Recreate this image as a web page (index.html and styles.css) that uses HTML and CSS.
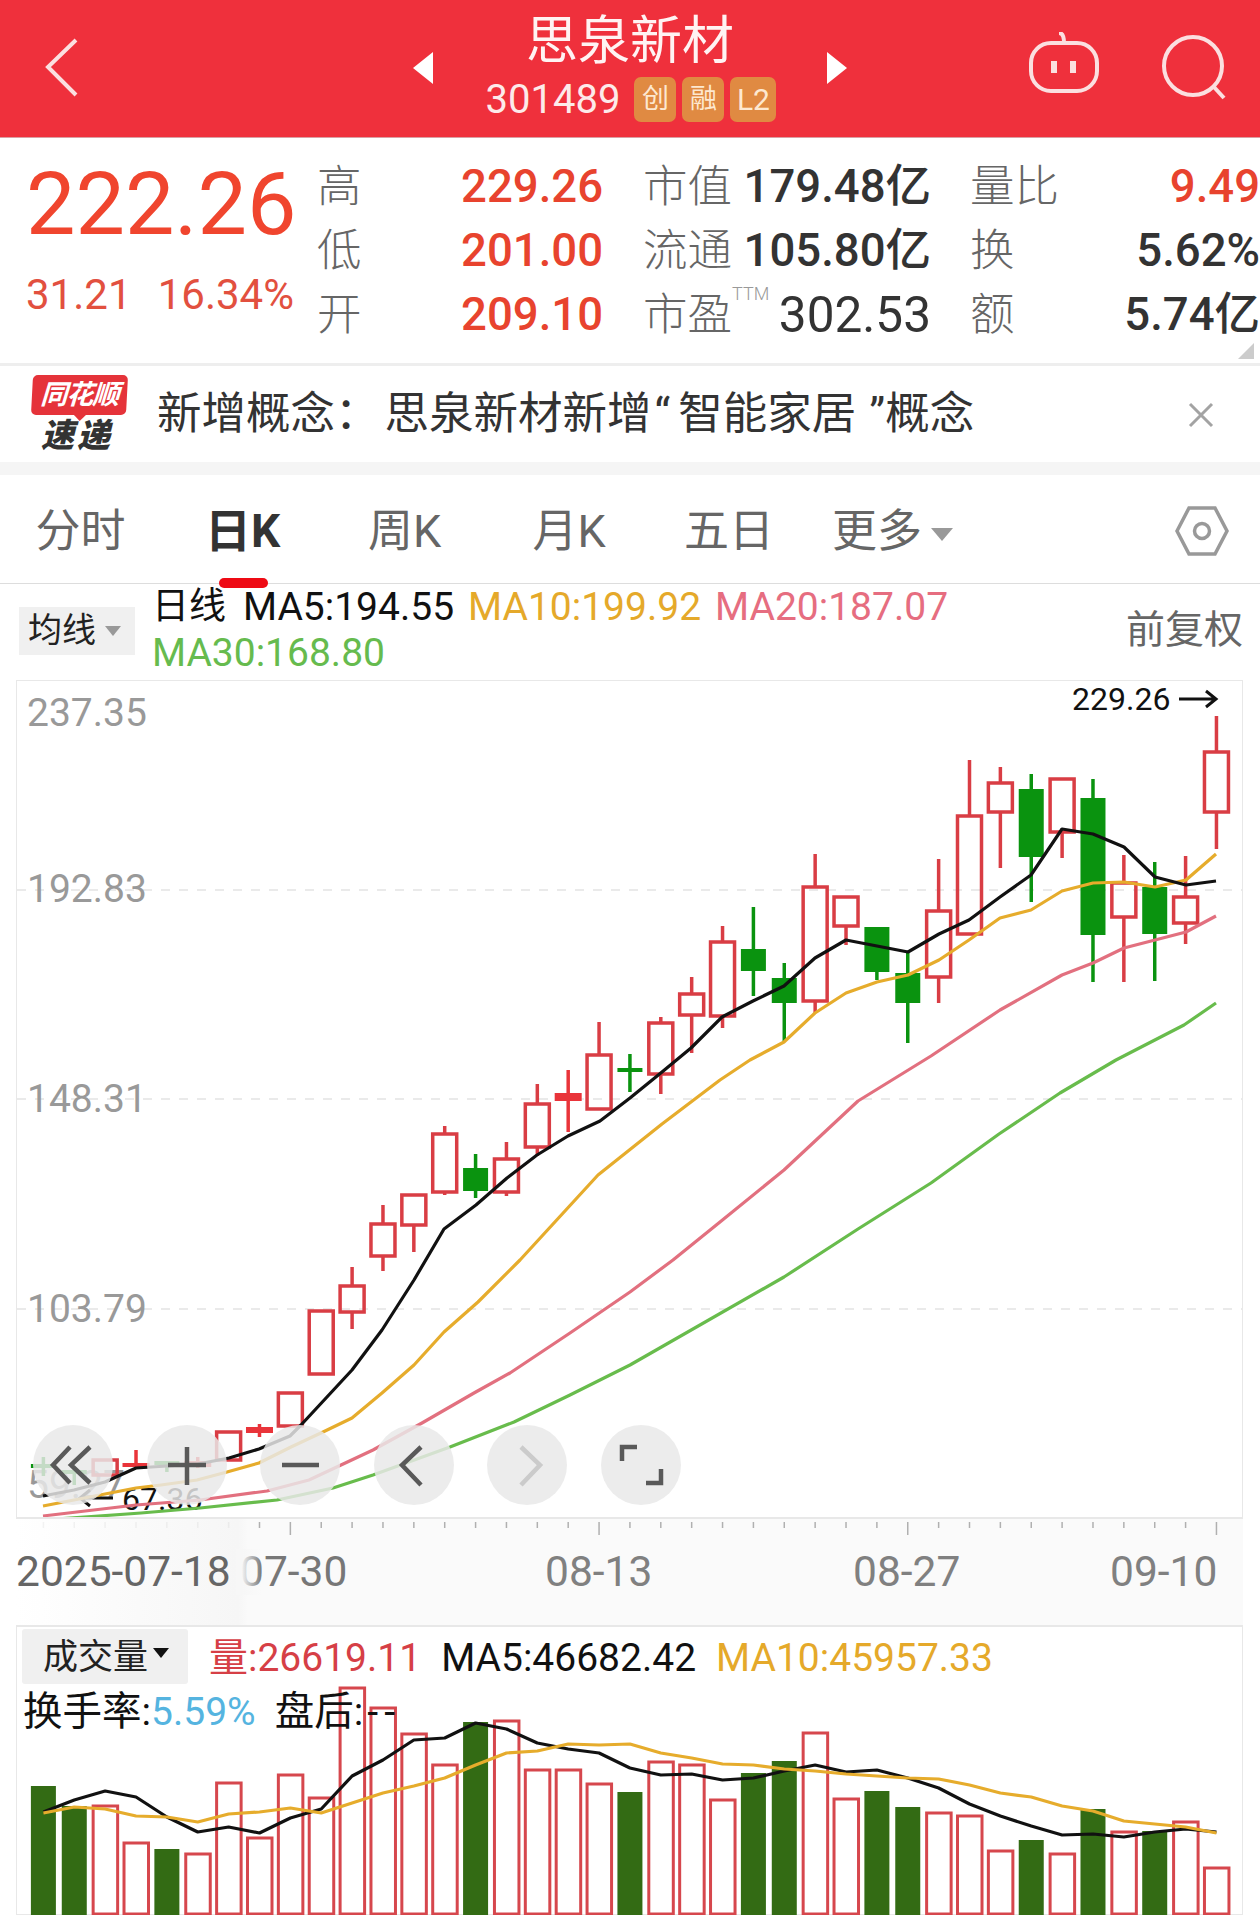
FILE: index.html
```html
<!DOCTYPE html>
<html lang="zh-CN">
<head>
<meta charset="utf-8">
<title>思泉新材 301489</title>
<link rel="stylesheet" href="styles.css">
</head>
<body>
<div class="page">
  <header class="topbar">
    <svg class="back" width="34" height="60" viewBox="0 0 34 60"><polyline points="31,2 3,29 31,57" fill="none" stroke="#fbdfe0" stroke-width="4"/></svg>
    <svg class="tri tri-left" width="20" height="32" viewBox="0 0 20 32"><polygon points="20,0 0,16 20,32" fill="#fff"/></svg>
    <div class="stock">
      <div class="stock-name">思泉新材</div>
      <div class="stock-sub">
        <span class="stock-code">301489</span>
        <span class="tag tag-a">创</span>
        <span class="tag tag-b">融</span>
        <span class="tag tag-c">L2</span>
      </div>
    </div>
    <svg class="tri" width="20" height="32" viewBox="0 0 20 32"><polygon points="0,0 20,16 0,32" fill="#fff"/></svg>
    <svg class="robot" width="70" height="62" viewBox="0 0 70 62"><path d="M30 1c3 0 5 3 5 10" fill="none" stroke="#fbdfe0" stroke-width="4"/><rect x="2" y="11" width="66" height="48" rx="20" fill="none" stroke="#fbdfe0" stroke-width="4"/><rect x="22" y="29" width="6" height="12" fill="#fbdfe0"/><rect x="41" y="29" width="6" height="12" fill="#fbdfe0"/></svg>
    <svg class="search" width="66" height="66" viewBox="0 0 66 66"><circle cx="32" cy="31" r="29" fill="none" stroke="#fbdfe0" stroke-width="4"/><line x1="52" y1="51" x2="63" y2="63" stroke="#fbdfe0" stroke-width="4"/></svg>
  </header>

  <section class="quote">
    <div class="price-block">
      <div class="price">222.26</div>
      <div class="change"><span>31.21</span><span>16.34%</span></div>
    </div>
    <div class="stat-col col-hl">
      <div class="stat"><span class="k">高</span><span class="v red">229.26</span></div>
      <div class="stat"><span class="k">低</span><span class="v red">201.00</span></div>
      <div class="stat"><span class="k">开</span><span class="v red">209.10</span></div>
    </div>
    <div class="stat-col col-cap">
      <div class="stat"><span class="k">市值</span><span class="v">179.48亿</span></div>
      <div class="stat"><span class="k">流通</span><span class="v">105.80亿</span></div>
      <div class="stat"><span class="k">市盈<sup class="ttm">TTM</sup></span><span class="v thin">302.53</span></div>
    </div>
    <div class="stat-col col-vol">
      <div class="stat"><span class="k">量比</span><span class="v red">9.49</span></div>
      <div class="stat"><span class="k">换</span><span class="v">5.62%</span></div>
      <div class="stat"><span class="k">额</span><span class="v">5.74亿</span></div>
    </div>
    <span class="corner"></span>
  </section>

  <section class="news">
    <div class="logo">
      <div class="logo-top">同花顺</div>
      <div class="logo-bottom">速递</div>
    </div>
    <div class="news-text">新增概念<span class="colon">：</span>思泉新材新增<span class="ql">“</span>智能家居<span class="qr">”</span>概念</div>
    <svg class="close" width="26" height="26" viewBox="0 0 26 26"><path d="M2 2L24 24M24 2L2 24" stroke="#a3a3a3" stroke-width="3"/></svg>
  </section>

  <nav class="tabs">
    <span class="tab">分时</span>
    <span class="tab active">日K</span>
    <span class="tab">周K</span>
    <span class="tab tab-month">月K</span>
    <span class="tab tab-five">五日</span>
    <span class="tab tab-more">更多<i class="caret"></i></span>
    <svg class="hex" width="54" height="52" viewBox="0 0 54 52"><polygon points="2,26 14,3 40,3 52,26 40,49 14,49" fill="none" stroke="#999" stroke-width="3.5"/><circle cx="27" cy="26" r="7.5" fill="none" stroke="#999" stroke-width="3.5"/></svg>
  </nav>

  <section class="legend">
    <div class="select"><span class="select-label">均线</span><i class="caret small"></i></div>
    <div class="legend-lines">
      <div class="legend-row"><span class="black">日线</span><span class="black">MA5:194.55</span><span class="orange">MA10:199.92</span><span class="pink">MA20:187.07</span></div>
      <div class="legend-row"><span class="green">MA30:168.80</span></div>
    </div>
    <div class="adjust">前复权</div>
  </section>

  <section class="kchart">
    <svg id="kline" class="kline" width="1227" height="838" viewBox="16 680 1227 838">
      <line class="grid" x1="17" x2="1243" y1="890" y2="890"/>
      <line class="grid" x1="17" x2="1243" y1="1099" y2="1099"/>
      <line class="grid" x1="17" x2="1243" y1="1309" y2="1309"/>
      <text class="axis" x="27" y="726">237.35</text>
      <text class="axis" x="27" y="902">192.83</text>
      <text class="axis" x="27" y="1112">148.31</text>
      <text class="axis" x="27" y="1322">103.79</text>
      <text class="axis" x="27" y="1498">59.27</text>
      <text class="mark" x="1072" y="710">229.26</text>
      <path class="arrow" d="M1179 699H1216M1206 691L1216 699L1206 707"/>
      <text class="mark" x="122" y="1510">67.36</text>
      <path class="arrow" d="M113 1498H80M90 1490L80 1498L90 1506"/>
    </svg>
    <div class="tools">
      <span class="tool"><svg width="80" height="80" viewBox="0 0 80 80"><path d="M37 22L20 40L37 58M57 22L38 40L57 58" class="tool-icon"/></svg></span>
      <span class="tool"><svg width="80" height="80" viewBox="0 0 80 80"><path d="M40 22V60M21 40H59" class="tool-icon"/></svg></span>
      <span class="tool"><svg width="80" height="80" viewBox="0 0 80 80"><path d="M22 40H59" class="tool-icon"/></svg></span>
      <span class="tool"><svg width="80" height="80" viewBox="0 0 80 80"><path d="M47 22L28 40L47 60" class="tool-icon"/></svg></span>
      <span class="tool"><svg width="80" height="80" viewBox="0 0 80 80"><path d="M34 22L53 40L34 60" class="tool-icon off"/></svg></span>
      <span class="tool"><svg width="80" height="80" viewBox="0 0 80 80"><path d="M21 36V22H36M60 44V58H45" class="tool-icon"/></svg></span>
    </div>
  </section>

  <section class="dates">
    <svg id="ticks" class="ticks" width="1227" height="20" viewBox="16 1519 1227 20"></svg>
    <div class="date-row">
      <span class="date dark">2025-07-18</span>
      <span class="date fade">07-30</span>
      <span class="date">08-13</span>
      <span class="date">08-27</span>
      <span class="date">09-10</span>
    </div>
  </section>

  <section class="volume">
    <svg id="vol" class="vol" width="1227" height="290" viewBox="16 1625 1227 290"></svg>
    <div class="vol-row">
      <div class="select vol-select"><span class="select-label">成交量</span><i class="caret black-caret"></i></div>
      <span class="vol-red">量:26619.11</span>
      <span class="black">MA5:46682.42</span>
      <span class="orange">MA10:45957.33</span>
    </div>
    <div class="vol-row second">
      <span class="black">换手率:<span class="blue">5.59%</span></span>
      <span class="black">盘后:<span class="dashes">--</span></span>
    </div>
  </section>
</div>
<script src="chart.js"></script>
</body>
</html>
```
FILE: styles.css
```css
* { box-sizing: border-box; }
html, body { margin: 0; padding: 0; background: #fff; }
body { font-family: Roboto, "Noto Sans CJK SC", sans-serif; color: #333; }
.page { width: 1260px; height: 1922px; overflow: hidden; }

.topbar { height: 138px; background: #ef303c; border-bottom: 1px solid #d9a0a4; display: flex; align-items: center; padding-left: 45px; color: #fff; }
.back { margin-top: -2px; flex: none; }
.tri { flex: none; margin-top: -2px; }
.tri-left { margin-left: 334px; }
.stock { width: 394px; display: flex; flex-direction: column; align-items: center; margin-top: -10px; }
.stock-name { font-size: 52px; line-height: 74px; color: #fff3f3; }
.stock-sub { display: flex; align-items: center; gap: 6px; height: 46px; margin-top: -2px; margin-left: 2px; }
.stock-code { font-size: 40px; line-height: 46px; margin-right: 8px; color: #fdeaea; }
.tag { height: 45px; background: #e08a42; border-radius: 7px; color: #fde8d0; font-size: 27px; line-height: 45px; text-align: center; width: 42px; }
.tag-c { width: 46px; font-size: 30px; }
.robot { margin-left: 182px; flex: none; margin-top: -11px; }
.search { margin-left: 62px; flex: none; margin-top: -2px; }

.quote { position: relative; height: 228px; display: flex; padding: 15px 0 0 26px; border-bottom: 3px solid #eee; }
.price-block { width: 292px; display: flex; flex-direction: column; }
.price { font-size: 88px; line-height: 88px; margin-top: 7px; color: #f0452e; }
.change { width: 268px; display: flex; justify-content: space-between; font-size: 42px; line-height: 40px; margin-top: 27px; color: #e2503f; }
.stat-col { display: flex; flex-direction: column; }
.col-hl { width: 285px; }
.col-cap { width: 287px; margin-left: 41px; }
.col-vol { width: 289px; margin-left: 40px; }
.stat { height: 64px; display: flex; align-items: center; justify-content: space-between; }
.k { font-size: 44.5px; line-height: 50px; color: #666; font-weight: 300; position: relative; top: 2px; left: -1px; }
.v { font-size: 45.5px; line-height: 50px; font-weight: 500; color: #333; white-space: nowrap; position: relative; top: 2px; }
.v.thin { font-weight: 400; font-size: 49.5px; }
.v.red { color: #e8432e; }
.ttm { position: absolute; left: 100%; top: -7px; font-size: 18px; line-height: 22px; margin-left: 0; color: #999; vertical-align: baseline; font-weight: 300; }
.corner { position: absolute; right: 6px; bottom: 4px; width: 0; height: 0; border-left: 16px solid transparent; border-bottom: 16px solid #ccc; }

.news { height: 109px; display: flex; align-items: flex-start; padding: 9px 0 0 32px; border-bottom: 13px solid #f5f5f5; }
.logo { width: 97px; flex: none; }
.logo-top { height: 40px; width: 95px; background: #e5333a; color: #fff; border-radius: 5px; font-size: 27px; line-height: 40px; font-weight: 700; font-style: italic; text-align: center; transform: skewX(-3deg); position: relative; letter-spacing: -1px; }
.logo-top::after { content: ""; position: absolute; left: 43px; top: 100%; border: 6px solid transparent; border-top: 6px solid #e5333a; }
.logo-bottom { font-size: 33px; line-height: 36px; font-weight: 900; font-style: italic; color: #333; text-align: center; letter-spacing: 3px; margin-top: 3px; margin-left: -7px; }
.news-text { font-size: 44.5px; line-height: 76px; margin-left: 28px; margin-top: 1px; width: 1005px; white-space: nowrap; color: #333; font-weight: 400; }
.colon { margin-right: 5px; }
.ql { padding: 0 8px 0 3px; }
.qr { padding-left: 13px; }
.close { margin-top: 27px; margin-left: 26px; flex: none; }

.tabs { height: 109px; display: flex; align-items: center; border-bottom: 1px solid #ddd; padding-bottom: 4px; position: relative; }
.tab { width: 163px; text-align: center; font-size: 45px; color: #666; font-weight: 400; position: relative; margin-left: -1px; }
.tab.active { color: #333; font-weight: 700; font-size: 46px; }
.tab.active::after { content: ""; position: absolute; left: 58px; width: 49px; bottom: -28px; height: 10px; border-radius: 5px; background: #ee0a14; }
.tab-month { margin-left: 1.5px; }
.tab-five { margin-left: -3px; }
.tab-more { margin-left: 0.5px; }
.caret { display: inline-block; margin-left: 9px; vertical-align: middle; width: 0; height: 0; border-left: 11px solid transparent; border-right: 11px solid transparent; border-top: 13px solid #999; }
.caret.small { border-left-width: 8px; border-right-width: 8px; border-top-width: 10px; }
.black-caret { border-left-width: 8px; border-right-width: 8px; border-top-width: 10px; border-top-color: #111; margin-left: 5px; margin-top: -8px; }
.hex { margin-left: 201px; margin-top: 7px; flex: none; }

.legend { height: 96px; display: flex; align-items: flex-start; padding-left: 19px; }
.select { background: #f0f0f0; display: flex; align-items: center; }
.select-label { line-height: 40px; position: relative; top: -1px; }
.legend > .select { width: 116px; height: 48px; margin-top: 23px; padding-left: 9px; font-size: 34px; color: #222; }
.legend-lines { margin-left: 17px; width: 960px; }
.legend-row { display: flex; gap: 14px; height: 46px; line-height: 46px; font-size: 39px; white-space: nowrap; }
.legend-row span:first-child { font-size: 37px; margin-right: 3px; }
.legend-row .green:first-child { font-size: 39px; }
.adjust { font-size: 39px; line-height: 46px; color: #666; margin-left: 14px; margin-top: 23px; white-space: nowrap; }
.black { color: #111; }
.orange { color: #e5a92a; }
.pink { color: #e66d80; }
.green { color: #66bb4e; }
.blue { color: #55b4e0; }

.kchart { position: relative; width: 1227px; height: 839px; margin-left: 16px; }
.kline { display: block; position: absolute; left: 0; top: 0; }
.kchart::after { content: ""; position: absolute; inset: 0; border: 1px solid #e8e8e8; border-width: 1px 1px 2px 1px; pointer-events: none; }
.grid { stroke: #e4e4e4; stroke-width: 1.5; stroke-dasharray: 9 9; }
.axis { font-size: 39px; fill: #999; font-family: Roboto, sans-serif; }
.mark { font-size: 32px; fill: #111; font-family: Roboto, sans-serif; }
.arrow { fill: none; stroke: #111; stroke-width: 3; }
.tools { position: absolute; left: 17px; top: 745px; display: flex; gap: 33.6px; z-index: 2; }
.tool { width: 80px; height: 80px; border-radius: 50%; background: rgba(232,232,232,.84); display: block; }
.tool svg { display: block; }
.tool-icon { fill: none; stroke: #595959; stroke-width: 4.5; }
.tool-icon.off { stroke: #cbcbcb; }

.dates { width: 1227px; height: 106px; margin-left: 16px; background: linear-gradient(90deg, #fff 0, #f6f6f6 222px, #fafafa 232px, #fafafa 100%); }
.ticks { display: block; }
.date-row { display: grid; grid-template-columns: 224px 305px 308px 257px 1fr; padding-left: 0; margin-top: 10px; }
.date { font-size: 42.5px; line-height: 46px; color: #808080; white-space: nowrap; position: relative; }
.date.dark { color: #666; }
.date.fade { color: #777; }
.date.fade::before { content: ""; position: absolute; left: -4px; top: 0; width: 26px; height: 46px; background: linear-gradient(90deg, #f7f7f7 20%, rgba(247,247,247,0)); }

.volume { position: relative; width: 1227px; height: 290px; margin-left: 16px; border: 1px solid #e8e8e8; border-top-width: 2px; }
.vol { position: absolute; left: -1px; top: -2px; display: block; }
.vol-row { position: relative; display: flex; align-items: center; font-size: 39px; white-space: nowrap; }
.vol-row > span { line-height: 46px; }
.vol-select { width: 166px; height: 55px; margin: 2px 21px 0 5px; padding-left: 21px; font-size: 35px; color: #222; border-radius: 3px; }
.vol-select .select-label { top: 1px; }
.vol-row .black { margin-right: 20px; }
.vol-red { color: #d63f46; margin-right: 20px; position: relative; top: 2px; }
.vol-row > .black, .vol-row > .orange { position: relative; top: 2px; }
.second { padding-left: 6px; margin-top: 3px; }
.second .black { font-size: 39.5px; margin-right: 19px; }
.second .blue { font-size: 39px; }
.dashes { letter-spacing: 6px; margin-left: 4px; }
```
FILE: chart.js
```js
var NS = "http://www.w3.org/2000/svg";
var X0 = 43.4, DX = 30.87;
function xAt(i) { return X0 + DX * i; }
function el(parent, name, attrs) {
  var n = document.createElementNS(NS, name);
  for (var k in attrs) n.setAttribute(k, attrs[k]);
  parent.appendChild(n);
  return n;
}
var RED = "#d93d44", GREEN = "#0a930f";

// [body top, body bottom, wick top, wick bottom, colour]
var candles = [
  [1464,1468,1457,1476,"g"],[1470,1474,1468,1485,"g"],[1460,1475,1460,1475,"r"],[1463,1467,1450,1468,"R"],
  [1461,1465,1461,1472,"g"],[1461,1467,1457,1468,"R"],[1432,1460,1431,1460,"r"],[1427,1433,1424,1437,"R"],
  [1393,1426,1393,1426,"r"],[1311,1374,1311,1374,"r"],[1286,1312,1267,1329,"r"],[1224,1256,1205,1271,"r"],
  [1195,1225,1195,1252,"r"],[1134,1192,1126,1195,"r"],[1168,1191,1154,1198,"g"],[1159,1192,1142,1196,"r"],
  [1104,1147,1084,1156,"r"],[1093,1101,1070,1132,"R"],[1055,1109,1022,1109,"r"],[1068,1072,1054,1092,"g"],
  [1023,1074,1017,1094,"r"],[994,1015,977,1053,"r"],[942,1016,926,1028,"r"],[949,971,907,996,"g"],
  [978,1003,963,1042,"g"],[887,1001,854,1013,"r"],[897,926,897,945,"r"],[927,972,927,980,"g"],
  [973,1003,953,1043,"g"],[911,977,859,1003,"r"],[816,934,760,934,"r"],[783,812,767,868,"r"],
  [789,857,774,902,"g"],[779,832,779,858,"r"],[798,935,779,982,"g"],[883,917,855,982,"r"],
  [887,934,862,981,"g"],[897,923,856,944,"r"],[752,812,716,849,"r"]
];

var ma5 = [[43,1496],[74,1490],[105,1482],[136,1468],[167,1466],[198,1464],[229,1458],[259,1449],[290,1436],[301,1425],[352,1370],[382,1330],[414,1280],[444,1229],[476,1205],[507,1178],[537,1155],[568,1136],[600,1121],[630,1098],[662,1072],[691,1048],[722,1017],[753,1001],[784,986],[815,958],[846,940],[877,946],[908,952],[939,934],[969,920],[1000,897],[1031,875],[1062,829],[1093,834],[1124,847],[1155,877],[1186,885],[1216,881]];
var ma10 = [[43,1506],[136,1488],[161,1485],[197,1480],[227,1472],[259,1463],[291,1447],[323,1432],[352,1418],[382,1393],[414,1365],[444,1332],[478,1302],[520,1260],[598,1175],[662,1124],[720,1080],[750,1060],[784,1042],[815,1013],[846,993],[877,982],[908,975],[939,960],[969,940],[1000,918],[1031,910],[1062,891],[1093,883],[1124,882],[1155,887],[1186,880],[1216,854]];
var ma20 = [[43,1516],[136,1505],[200,1500],[267,1491],[309,1480],[341,1465],[373,1450],[422,1423],[474,1393],[510,1373],[570,1333],[630,1292],[673,1260],[720,1222],[784,1170],[858,1101],[931,1056],[1000,1010],[1062,975],[1093,963],[1124,948],[1155,940],[1186,932],[1216,916]];
var ma30 = [[43,1520],[141,1513],[200,1508],[277,1500],[333,1488],[373,1475],[450,1447],[514,1422],[570,1395],[630,1365],[784,1277],[858,1229],[931,1183],[999,1134],[1060,1093],[1116,1060],[1184,1025],[1216,1003]];

var volTops = [
  [1786,"g"],[1806,"g"],[1805,"r"],[1842,"r"],[1849,"g"],[1853,"r"],[1782,"r"],[1837,"r"],[1774,"r"],[1797,"r"],
  [1687,"r"],[1707,"r"],[1733,"r"],[1764,"r"],[1722,"g"],[1720,"r"],[1769,"r"],[1769,"r"],[1783,"r"],[1792,"g"],
  [1761,"r"],[1764,"r"],[1799,"r"],[1773,"g"],[1761,"g"],[1732,"r"],[1798,"r"],[1791,"g"],[1807,"g"],[1812,"r"],
  [1815,"r"],[1850,"r"],[1840,"g"],[1853,"r"],[1809,"g"],[1831,"r"],[1831,"g"],[1821,"r"],[1867,"r"]
];
var vma5 = [1812,1800,1791,1797,1817,1832,1827,1833,1818,1809,1776,1760,1740,1738,1723,1729,1743,1749,1753,1768,1775,1774,1780,1778,1771,1765,1772,1770,1778,1788,1804,1816,1826,1835,1834,1837,1832,1829,1832];
var vma10 = [1813,1807,1809,1816,1817,1822,1814,1812,1808,1813,1803,1793,1786,1778,1765,1753,1751,1744,1745,1744,1753,1758,1764,1765,1769,1771,1774,1776,1778,1779,1785,1793,1797,1806,1811,1821,1824,1827,1833];

function polyline(svg, pts, color, w) {
  el(svg, "polyline", { points: pts.map(function (p) { return p.join(","); }).join(" "), fill: "none", stroke: color, "stroke-width": w, "stroke-linejoin": "round" });
}

var k = document.getElementById("kline");
candles.forEach(function (c, i) {
  var x = xAt(i), kind = c[4];
  var col = kind === "g" ? GREEN : kind === "R" ? "#e9343a" : RED;
  if (c[2] < c[0]) el(k, "line", { x1: x, x2: x, y1: c[2], y2: c[0], stroke: col, "stroke-width": 3.5 });
  if (c[3] > c[1]) el(k, "line", { x1: x, x2: x, y1: c[1], y2: c[3], stroke: col, "stroke-width": 3.5 });
  if (kind === "r") {
    el(k, "rect", { x: x - 12, y: c[0], width: 24, height: c[1] - c[0], fill: "#fff", "fill-opacity": 0, stroke: col, "stroke-width": 3.5 });
  } else {
    var w = kind === "R" ? 27 : 25;
    el(k, "rect", { x: x - w / 2, y: c[0], width: w, height: c[1] - c[0], fill: col });
  }
});
polyline(k, ma30, "#68bc4c", 3.2);
polyline(k, ma20, "#e2707f", 3.2);
polyline(k, ma10, "#e6ac2c", 3.2);
polyline(k, ma5, "#111", 3.2);

var t = document.getElementById("ticks");
for (var i = 0; i < 39; i++) {
  var long = (i - 8) % 10 === 0;
  var alpha = i < 7 ? 0.15 : 1;
  el(t, "line", { x1: xAt(i), x2: xAt(i), y1: 1522, y2: long ? 1535 : 1528, stroke: "#b0b0b0", "stroke-width": 1.5, "stroke-opacity": alpha });
}

var v = document.getElementById("vol");
volTops.forEach(function (b, i) {
  var x = xAt(i);
  if (b[1] === "g") {
    el(v, "rect", { x: x - 12.5, y: b[0], width: 25, height: 1915 - b[0], fill: "#336b14" });
  } else {
    el(v, "rect", { x: x - 12, y: b[0] + 1, width: 24.5, height: 1913 - b[0], fill: "none", stroke: "#d6474d", "stroke-width": 3 });
  }
});
function series(a) { return a.map(function (y, i) { return [xAt(i), y]; }); }
polyline(v, series(vma5), "#111", 3.2);
polyline(v, series(vma10), "#e6ac2c", 3.2);
```
